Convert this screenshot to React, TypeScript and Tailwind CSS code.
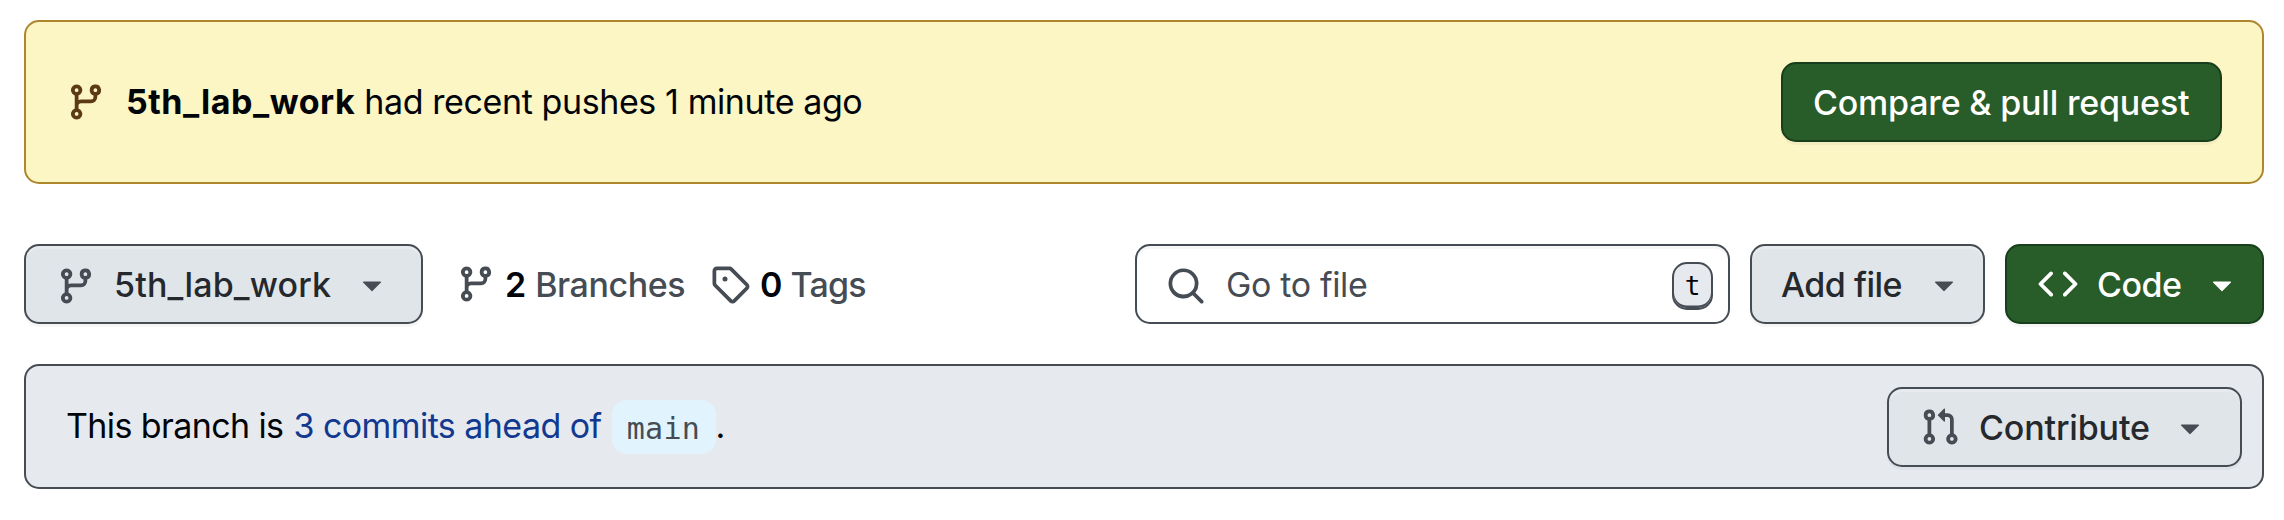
import type { ReactNode } from 'react';

const paths = {
  branch:
    'M9.5 3.25a2.25 2.25 0 1 1 3 2.122V6A2.5 2.5 0 0 1 10 8.5H6a1 1 0 0 0-1 1v1.128a2.251 2.251 0 1 1-1.5 0V5.372a2.25 2.25 0 1 1 1.5 0v1.836A2.493 2.493 0 0 1 6 7h4a1 1 0 0 0 1-1v-.628A2.25 2.25 0 0 1 9.5 3.25Zm-6 0a.75.75 0 1 0 1.5 0 .75.75 0 0 0-1.5 0Zm8.25-.75a.75.75 0 1 0 0 1.5.75.75 0 0 0 0-1.5ZM4.25 12a.75.75 0 1 0 0 1.5.75.75 0 0 0 0-1.5Z',
  tag: 'M1 7.775V2.75C1 1.784 1.784 1 2.75 1h5.025c.464 0 .91.184 1.238.513l6.25 6.25a1.75 1.75 0 0 1 0 2.474l-5.026 5.026a1.75 1.75 0 0 1-2.474 0l-6.25-6.25A1.752 1.752 0 0 1 1 7.775Zm1.5 0c0 .066.026.13.073.177l6.25 6.25a.25.25 0 0 0 .354 0l5.025-5.025a.25.25 0 0 0 0-.354l-6.25-6.25a.25.25 0 0 0-.177-.073H2.75a.25.25 0 0 0-.25.25ZM6 5a1 1 0 1 1 0 2 1 1 0 0 1 0-2Z',
  search:
    'M10.68 11.74a6 6 0 0 1-7.922-8.982 6 6 0 0 1 8.982 7.922l3.04 3.04a.749.749 0 0 1-.326 1.275.749.749 0 0 1-.734-.215ZM11.5 7a4.499 4.499 0 1 0-8.997 0A4.499 4.499 0 0 0 11.5 7Z',
  code: 'm11.28 3.22 4.25 4.25a.75.75 0 0 1 0 1.06l-4.25 4.25a.749.749 0 0 1-1.275-.326.749.749 0 0 1 .215-.734L13.94 8l-3.72-3.72a.749.749 0 0 1 .326-1.275.749.749 0 0 1 .734.215Zm-6.56 0a.751.751 0 0 1 1.042.018.751.751 0 0 1 .018 1.042L2.06 8l3.72 3.72a.749.749 0 0 1-.326 1.275.749.749 0 0 1-.734-.215L.47 8.53a.75.75 0 0 1 0-1.06Z',
  pull: 'M1.5 3.25a2.25 2.25 0 1 1 3 2.122v5.256a2.251 2.251 0 1 1-1.5 0V5.372A2.25 2.25 0 0 1 1.5 3.25Zm5.677-.177L9.573.677A.25.25 0 0 1 10 .854V2.5h1A2.5 2.5 0 0 1 13.5 5v5.628a2.251 2.251 0 1 1-1.5 0V5a1 1 0 0 0-1-1h-1v1.646a.25.25 0 0 1-.427.177L7.177 3.427a.25.25 0 0 1 0-.354ZM3.75 2.5a.75.75 0 1 0 0 1.5.75.75 0 0 0 0-1.5Zm0 9.5a.75.75 0 1 0 0 1.5.75.75 0 0 0 0-1.5Zm8.25.75a.75.75 0 1 0 1.5 0 .75.75 0 0 0-1.5 0Z',
  caret: 'm4.427 7.427 3.396 3.396a.25.25 0 0 0 .354 0l3.396-3.396A.25.25 0 0 0 11.396 7H4.604a.25.25 0 0 0-.177.427Z',
};

function Icon({ name, className = '' }: { name: keyof typeof paths; className?: string }) {
  return (
    <svg viewBox="0 0 16 16" fill="currentColor" aria-hidden="true" className={`size-10 shrink-0 ${className}`}>
      <path d={paths[name]} />
    </svg>
  );
}

function Button({ primary = false, className = '', children }: { primary?: boolean; className?: string; children: ReactNode }) {
  const tone = primary
    ? 'border-[#183f1b] bg-[#285c28] text-white shadow-[0_3px_0_rgba(31,35,40,0.04)]'
    : 'border-[#464c54] bg-[#e0e5e9] text-[#25292e] shadow-[0_3px_0_rgba(31,35,40,0.04),inset_0_3px_0_rgba(255,255,255,0.25)]';
  return (
    <button className={`flex h-20 shrink-0 items-center rounded-[15px] border-2 font-medium ${tone} ${className}`}>
      {children}
    </button>
  );
}

export default function App() {
  return (
    <div className="flex h-[520px] w-[2284px] flex-col bg-white px-5 pt-5 font-['Inter','Liberation_Sans',sans-serif] text-[34px] leading-[41px] whitespace-nowrap text-[#010409]">
      <section className="mx-1 flex h-[164px] w-[2240px] items-center rounded-[15px] border-2 border-[#ae862c] bg-[#fcf5c4] pr-10 pl-10">
        <Icon name="branch" className="text-[#5c3a14]" />
        <p className="ml-5 flex-1 pb-0.5">
          <strong className="font-bold tracking-[0.545px]">5th_lab_work</strong>
          <span className="ml-[9px] tracking-[-0.4px]">had recent pushes 1 minute ago</span>
        </p>
        <Button primary className="w-[441px] pl-[30px]">
          <span className="pt-px tracking-[-0.192px]">Compare &amp; pull request</span>
        </Button>
      </section>

      <nav className="mx-1 mt-[60px] flex h-20 w-[2240px] items-center">
        <Button className="w-[399px] pl-[30px]">
          <Icon name="branch" className="mt-1 text-[#464c54]" />
          <span className="ml-[18px] pt-px tracking-[0.143px]">5th_lab_work</span>
          <Icon name="caret" className="ml-[21px] text-[#464c54]" />
        </Button>
        <a className="ml-[33px] flex items-center font-medium text-[#464c54]">
          <Icon name="branch" />
          <span className="ml-[9px] pt-px font-semibold text-[#010409]">2</span>
          <span className="ml-[9px] pt-px tracking-[-0.45px]">Branches</span>
        </a>
        <a className="ml-[25px] flex items-center font-medium text-[#464c54]">
          <Icon name="tag" />
          <span className="ml-[10px] pt-px font-semibold text-[#010409]">0</span>
          <span className="ml-[8px] pt-px tracking-[-0.8px]">Tags</span>
        </a>
        <div className="ml-auto flex h-20 w-[595px] items-center rounded-[15px] border-2 border-[#464c54] bg-white pr-[15px] pl-[29px] text-[#464c54] shadow-[inset_0_3px_0_rgba(31,35,40,0.04)]">
          <Icon name="search" className="mt-1" />
          <span className="ml-[20px] flex-1 pt-px tracking-[-0.345px]">Go to file</span>
          <kbd className="mt-1 flex h-12 w-[41px] items-center justify-center rounded-[15px] border-2 border-[#464c54] bg-[#e6eaef] pb-px font-['DejaVu_Sans_Mono',monospace] text-[26px] leading-none text-[#010409] shadow-[inset_0_-2.5px_0_#464c54]">
            t
          </kbd>
        </div>
        <Button className="ml-5 w-[235px] pl-[29px]">
          <span className="pt-px tracking-[-0.5px]">Add file</span>
          <Icon name="caret" className="ml-[22px] text-[#464c54]" />
        </Button>
        <Button primary className="ml-5 w-[259px] pl-[31px]">
          <Icon name="code" />
          <span className="ml-[19px] pt-px tracking-[-0.5px]">Code</span>
          <Icon name="caret" className="ml-[21px]" />
        </Button>
      </nav>

      <section className="mx-1 mt-10 flex h-[125px] w-[2240px] items-center rounded-[15px] border-2 border-[#464c54] bg-[#e6eaef] pr-5 pl-10">
        <p className="flex flex-1 items-center">
          <span className="pb-0.5 tracking-[-0.6px]">This branch is</span>
          <a className="ml-[10px] pb-0.5 tracking-[-0.57px] text-[#12398f]">3 commits ahead of</a>
          <code className="mt-px ml-[11px] flex h-[54px] w-[104px] items-center justify-center rounded-[15px] bg-[#e1f4fd] pt-1 pr-0.5 font-['DejaVu_Sans_Mono',monospace] text-[30px] leading-none tracking-[0.3px] text-[#464c54]">
            main
          </code>
          <span className="-ml-px pb-0.5">.</span>
        </p>
        <Button className="w-[355px] pl-[31px]">
          <Icon name="pull" className="text-[#464c54]" />
          <span className="ml-[19px] pt-px tracking-[-0.15px]">Contribute</span>
          <Icon name="caret" className="ml-[20px] text-[#464c54]" />
        </Button>
      </section>
    </div>
  );
}
